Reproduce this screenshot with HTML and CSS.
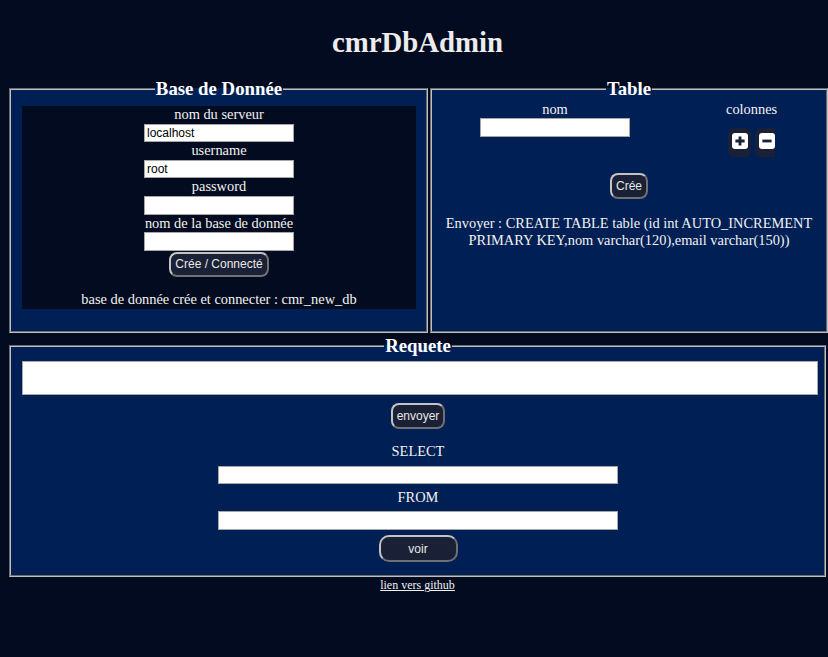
FILE: index.html
```html
<!DOCTYPE html>
<html lang="fr">
<head>
<meta charset="utf-8">
<title>cmrDbAdmin</title>
<link rel="stylesheet" href="styles.css">
</head>
<body>
<div class="page">
  <h1 class="title">cmrDbAdmin</h1>
  <div class="top-row">
    <fieldset class="panel panel-db">
      <legend class="panel-legend">Base de Donnée</legend>
      <div class="db-box">
        <label class="field-label">nom du serveur</label>
        <input class="field-input" type="text" value="localhost">
        <label class="field-label">username</label>
        <input class="field-input" type="text" value="root">
        <label class="field-label">password</label>
        <input class="field-input" type="password" value="">
        <label class="field-label">nom de la base de donnée</label>
        <input class="field-input" type="text" value="">
        <button class="btn btn-connect" type="button">Crée / Connecté</button>
        <p class="db-msg">base de donnée crée et connecter : cmr_new_db</p>
      </div>
    </fieldset>
    <fieldset class="panel panel-table">
      <legend class="panel-legend">Table</legend>
      <div class="table-body">
        <div class="table-row">
          <div class="col">
            <label class="field-label">nom</label>
            <input class="field-input" type="text" value="">
          </div>
          <div class="col">
            <label class="field-label">colonnes</label>
            <div class="icon-btns">
              <button class="icon-btn icon-plus" type="button" aria-label="ajouter">
                <svg width="16" height="16" viewBox="0 0 16 16"><rect x="0" y="0" width="16" height="16" rx="3" fill="#ffffff"/><path d="M8 3.4V12.6M3.4 8H12.6" stroke="#1a2035" stroke-width="2.8" fill="none"/></svg>
              </button>
              <button class="icon-btn icon-minus" type="button" aria-label="retirer">
                <svg width="16" height="16" viewBox="0 0 16 16"><rect x="0" y="0" width="16" height="16" rx="3" fill="#ffffff"/><path d="M3.4 8H12.6" stroke="#1a2035" stroke-width="2.8" fill="none"/></svg>
              </button>
            </div>
          </div>
        </div>
        <button class="btn btn-create" type="button">Crée</button>
        <p class="table-msg">Envoyer : CREATE TABLE table (id int AUTO_INCREMENT PRIMARY KEY,nom varchar(120),email varchar(150))</p>
      </div>
    </fieldset>
  </div>
  <fieldset class="panel panel-query">
    <legend class="panel-legend">Requete</legend>
    <div class="query-body">
      <input class="query-input" type="text" value="">
      <button class="btn btn-send" type="button">envoyer</button>
      <label class="field-label query-label">SELECT</label>
      <input class="field-input wide-input" type="text" value="">
      <label class="field-label query-label small-gap">FROM</label>
      <input class="field-input wide-input" type="text" value="">
      <button class="btn btn-voir" type="button">voir</button>
    </div>
  </fieldset>
  <a class="github-link" href="#">lien vers github</a>
</div>
</body>
</html>
```
FILE: styles.css
```css
html, body {
  background: #020b1f;
}
body {
  margin: 0;
  font-family: "Liberation Serif", "Times New Roman", serif;
  font-size: 14.4px;
  color: #f2f2f2;
}
.page {
  width: 817px;
  padding-left: 9px;
}
.title {
  margin: 26px 0 19px;
  font-size: 28.8px;
  line-height: 33px;
  font-weight: bold;
  text-align: center;
  color: #ececec;
}
.top-row {
  display: flex;
  gap: 2px;
  width: 819px;
}
.panel {
  margin: 0;
  min-width: 0;
  box-sizing: border-box;
  border: 2px groove #c0c0c0;
  background: #001f54;
}
.panel-legend {
  margin: 0 auto;
  padding: 0 1px;
  font-size: 18.8px;
  line-height: 22px;
  font-weight: bold;
  color: #ffffff;
}
.panel-db {
  width: 419px;
  padding: 6px 10px 22px 11px;
}
.db-box {
  background: #020b1f;
  height: 203px;
  display: flex;
  flex-direction: column;
  align-items: center;
}
.field-label {
  display: block;
  text-align: center;
  line-height: 17.6px;
  color: #f2f2f2;
}
.field-input {
  display: block;
  box-sizing: border-box;
  width: 150px;
  height: 18.6px;
  margin: 0;
  padding: 0 2px;
  border: 1px solid #a6a6a6;
  background: #ffffff;
  color: #000000;
  font-family: "Liberation Sans", Arial, sans-serif;
  font-size: 12px;
}
.btn {
  box-sizing: border-box;
  height: 25px;
  padding: 0 4px;
  border: 2px outset #c4c4c4;
  border-radius: 8px;
  background: #1a2035;
  color: #e8e8e8;
  font-family: "Liberation Sans", Arial, sans-serif;
  font-size: 12px;
}
.btn-connect {
  margin-top: 1px;
}
.db-msg {
  margin: 14.6px 0 0;
  line-height: 17.6px;
  text-align: center;
}
.panel-table {
  width: 398px;
  padding: 0.6px 11px 0 11px;
}
.table-body {
  display: flex;
  flex-direction: column;
  align-items: center;
}
.table-row {
  align-self: flex-start;
  display: flex;
  align-items: flex-start;
  gap: 96px;
  margin-left: 37px;
}
.col {
  display: flex;
  flex-direction: column;
  align-items: center;
}
.icon-btns {
  display: flex;
  gap: 4.5px;
  margin-top: 9.6px;
}
.icon-btn {
  box-sizing: border-box;
  height: 29px;
  border: none;
  border-radius: 6px;
  background: #1a2035;
  display: flex;
  align-items: flex-start;
  padding-top: 5.6px;
}
.icon-btn svg {
  display: block;
}
.icon-plus {
  width: 23px;
  padding-left: 3.7px;
  padding-right: 3.3px;
}
.icon-minus {
  width: 20px;
  padding-left: 4px;
  padding-right: 0;
  border-radius: 6px 0 0 6px;
}
.btn-create {
  margin-top: 16.2px;
  height: 26px;
}
.table-msg {
  margin: 15.6px 0 0;
  text-align: center;
}
.panel-query {
  width: 817px;
  margin-top: 2px;
  padding: 4px 10px 13.5px 11px;
}
.query-body {
  display: flex;
  flex-direction: column;
  align-items: center;
}
.query-input {
  align-self: flex-start;
  box-sizing: border-box;
  width: 796px;
  height: 34px;
  margin: 0;
  border: 1px solid #a6a6a6;
  background: #ffffff;
}
.btn-send {
  margin-top: 8px;
  height: 26px;
}
.query-label {
  margin-top: 14.3px;
}
.query-label.small-gap {
  margin-top: 4.4px;
}
.wide-input {
  width: 400px;
  margin-top: 5px;
}
.btn-voir {
  margin-top: 5.4px;
  width: 79px;
  height: 26.5px;
  border-radius: 10px;
}
.github-link {
  display: block;
  margin-top: 1px;
  text-align: center;
  font-size: 12px;
  color: #f0f0f0;
}
```
